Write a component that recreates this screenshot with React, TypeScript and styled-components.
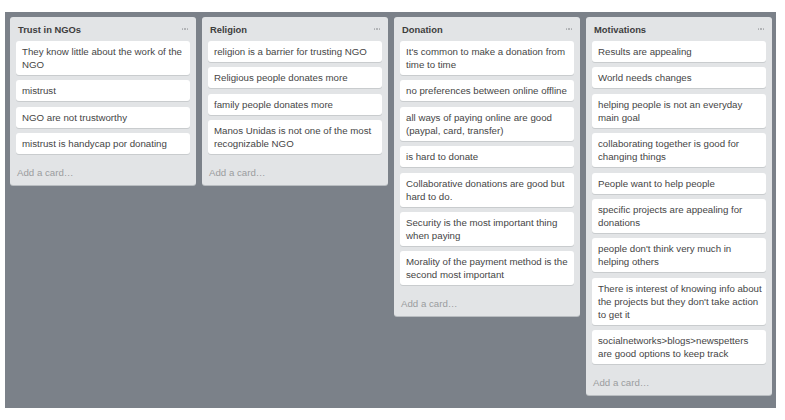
import React from "react";
import styled, { createGlobalStyle } from "styled-components";

const GlobalStyle = createGlobalStyle`
  html, body {
    margin: 0;
    padding: 0;
    background: #ffffff;
  }
  body {
    font-family: "Liberation Sans", Arial, sans-serif;
  }
`;

const Page = styled.div`
  padding: 12px 0 0 5px;
`;

const Board = styled.div`
  display: flex;
  align-items: flex-start;
  gap: 6px;
  width: 771px;
  height: 396px;
  box-sizing: border-box;
  padding: 5px;
  background: #7b8189;
  box-shadow: 0 1px 0 #d6d8da;
`;

const List = styled.div`
  width: 186px;
  flex: 0 0 186px;
  box-sizing: border-box;
  padding: 0 6px;
  background: #e2e4e6;
  border-radius: 3px;
  box-shadow: 0 1px 0 #b9bdc1;
`;

const ListHeader = styled.div`
  display: flex;
  align-items: center;
  justify-content: space-between;
  height: 24px;
  padding: 0 1px 0 2px;
`;

const ListTitle = styled.h2`
  margin: 0;
  font-size: 9.4px;
  font-weight: bold;
  color: #3d3d3d;
`;

const Dots = styled.span`
  display: flex;
  gap: 1px;
  padding-right: 1px;
  i {
    display: block;
    width: 1.4px;
    height: 1.4px;
    border-radius: 50%;
    background: #a8abae;
  }
`;

const Card = styled.div`
  background: #ffffff;
  border-radius: 3px;
  box-shadow: 0 1px 0 #c9ccce;
  padding: 4px 3px 4px 6px;
  margin-bottom: 5.4px;
  font-size: 9.7px;
  line-height: 13px;
  color: #454545;
`;

const AddCard = styled.div`
  padding: 6px 1px 6px 1px;
  line-height: 13px;
  font-size: 9.7px;
  color: #9a9c9e;
`;

type Column = { title: string; cards: string[] };

const columns: Column[] = [
  {
    title: "Trust in NGOs",
    cards: [
      "They know little about the work of the NGO",
      "mistrust",
      "NGO are not trustworthy",
      "mistrust is handycap por donating",
    ],
  },
  {
    title: "Religion",
    cards: [
      "religion is a barrier for trusting NGO",
      "Religious people donates more",
      "family people donates more",
      "Manos Unidas is not one of the most recognizable NGO",
    ],
  },
  {
    title: "Donation",
    cards: [
      "It's common to make a donation from time to time",
      "no preferences between online offline",
      "all ways of paying online are good (paypal, card, transfer)",
      "is hard to donate",
      "Collaborative donations are good but hard to do.",
      "Security is the most important thing when paying",
      "Morality of the payment method is the second most important",
    ],
  },
  {
    title: "Motivations",
    cards: [
      "Results are appealing",
      "World needs changes",
      "helping people is not an everyday main goal",
      "collaborating together is good for changing things",
      "People want to help people",
      "specific projects are appealing for donations",
      "people don't think very much in helping others",
      "There is interest of knowing info about the projects but they don't take action to get it",
      "socialnetworks>blogs>newspetters are good options to keep track",
    ],
  },
];

const App = () => {
  return (
    <>
      <GlobalStyle />
      <Page>
        <Board>
          {columns.map((col) => (
            <List key={col.title}>
              <ListHeader>
                <ListTitle>{col.title}</ListTitle>
                <Dots>
                  <i />
                  <i />
                  <i />
                </Dots>
              </ListHeader>
              {col.cards.map((c) => (
                <Card key={c}>{c}</Card>
              ))}
              <AddCard>Add a card…</AddCard>
            </List>
          ))}
        </Board>
      </Page>
    </>
  );
};

export default App;
